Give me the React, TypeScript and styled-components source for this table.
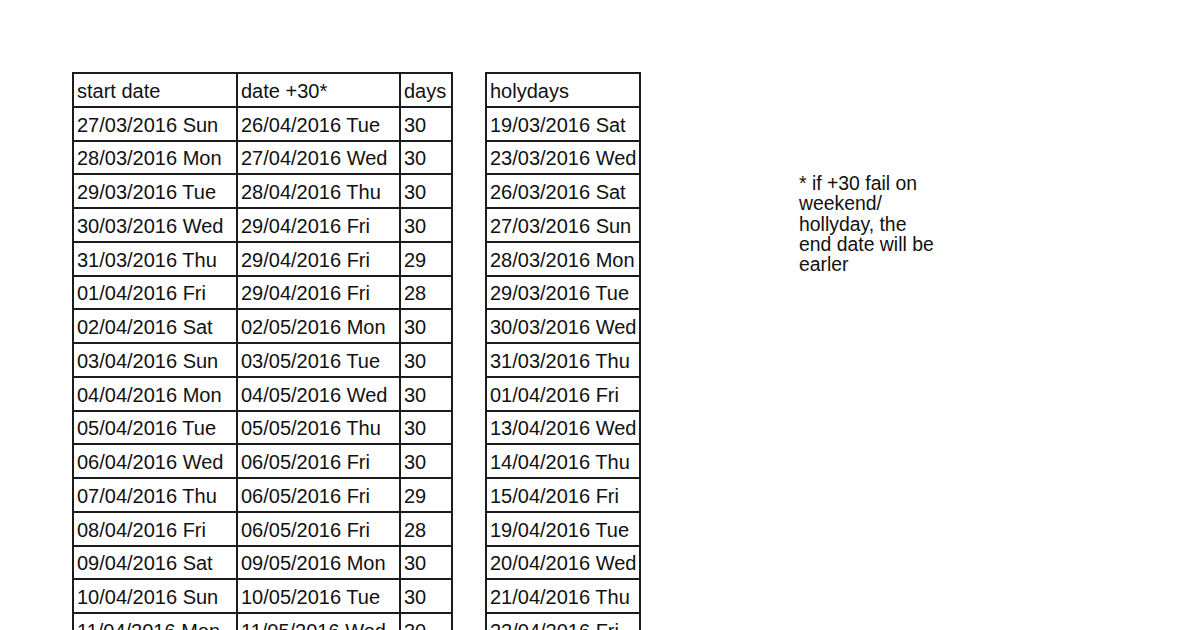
import React from "react";
import styled, { createGlobalStyle } from "styled-components";

const GlobalStyle = createGlobalStyle`
  html, body {
    margin: 0;
    padding: 0;
    background: #ffffff;
  }
  body {
    width: 1200px;
    height: 630px;
    overflow: hidden;
    font-family: "Liberation Sans", Arial, sans-serif;
    color: #111;
  }
`;

const Page = styled.div`
  display: flex;
  align-items: flex-start;
  padding: 72px 0 0 72px;
  height: 630px;
  box-sizing: border-box;
  overflow: hidden;
`;

const Grid = styled.div<{ $cols: string; $gap?: number }>`
  display: grid;
  grid-template-columns: ${(p) => p.$cols};
  grid-auto-rows: 33.75px;
  border-top: 2px solid #1c1c1c;
  border-left: 2px solid #1c1c1c;
  margin-right: ${(p) => p.$gap ?? 0}px;
  flex-shrink: 0;
`;

const Cell = styled.div`
  box-sizing: border-box;
  border-right: 2px solid #1c1c1c;
  border-bottom: 2px solid #1c1c1c;
  padding: 2px 0 0 3px;
  display: flex;
  align-items: center;
  font-size: 20px;
  line-height: 1;
  white-space: nowrap;
  overflow: hidden;
`;

const Note = styled.div`
  margin-top: 101px;
  width: 144px;
  font-size: 19.4px;
  line-height: 20.3px;
  color: #111;
`;

const rows: [string, string, string][] = [
  ["27/03/2016 Sun", "26/04/2016 Tue", "30"],
  ["28/03/2016 Mon", "27/04/2016 Wed", "30"],
  ["29/03/2016 Tue", "28/04/2016 Thu", "30"],
  ["30/03/2016 Wed", "29/04/2016 Fri", "30"],
  ["31/03/2016 Thu", "29/04/2016 Fri", "29"],
  ["01/04/2016 Fri", "29/04/2016 Fri", "28"],
  ["02/04/2016 Sat", "02/05/2016 Mon", "30"],
  ["03/04/2016 Sun", "03/05/2016 Tue", "30"],
  ["04/04/2016 Mon", "04/05/2016 Wed", "30"],
  ["05/04/2016 Tue", "05/05/2016 Thu", "30"],
  ["06/04/2016 Wed", "06/05/2016 Fri", "30"],
  ["07/04/2016 Thu", "06/05/2016 Fri", "29"],
  ["08/04/2016 Fri", "06/05/2016 Fri", "28"],
  ["09/04/2016 Sat", "09/05/2016 Mon", "30"],
  ["10/04/2016 Sun", "10/05/2016 Tue", "30"],
  ["11/04/2016 Mon", "11/05/2016 Wed", "30"],
  ["12/04/2016 Tue", "12/05/2016 Thu", "30"],
];

const holydays = [
  "19/03/2016 Sat",
  "23/03/2016 Wed",
  "26/03/2016 Sat",
  "27/03/2016 Sun",
  "28/03/2016 Mon",
  "29/03/2016 Tue",
  "30/03/2016 Wed",
  "31/03/2016 Thu",
  "01/04/2016 Fri",
  "13/04/2016 Wed",
  "14/04/2016 Thu",
  "15/04/2016 Fri",
  "19/04/2016 Tue",
  "20/04/2016 Wed",
  "21/04/2016 Thu",
  "22/04/2016 Fri",
  "25/04/2016 Mon",
];

const App: React.FC = () => {
  return (
    <>
      <GlobalStyle />
      <Page>
        <Grid $cols="164px 163px 52px" $gap={32}>
          <Cell>start date</Cell>
          <Cell>date +30*</Cell>
          <Cell>days</Cell>
          {rows.map((r, i) => (
            <React.Fragment key={i}>
              <Cell>{r[0]}</Cell>
              <Cell>{r[1]}</Cell>
              <Cell>{r[2]}</Cell>
            </React.Fragment>
          ))}
        </Grid>

        <Grid $cols="154px" $gap={158}>
          <Cell>holydays</Cell>
          {holydays.map((h) => (
            <Cell key={h}>{h}</Cell>
          ))}
        </Grid>

        <Note>
          * if +30 fail on weekend/ hollyday, the end date will be earler
        </Note>
      </Page>
    </>
  );
};

export default App;
